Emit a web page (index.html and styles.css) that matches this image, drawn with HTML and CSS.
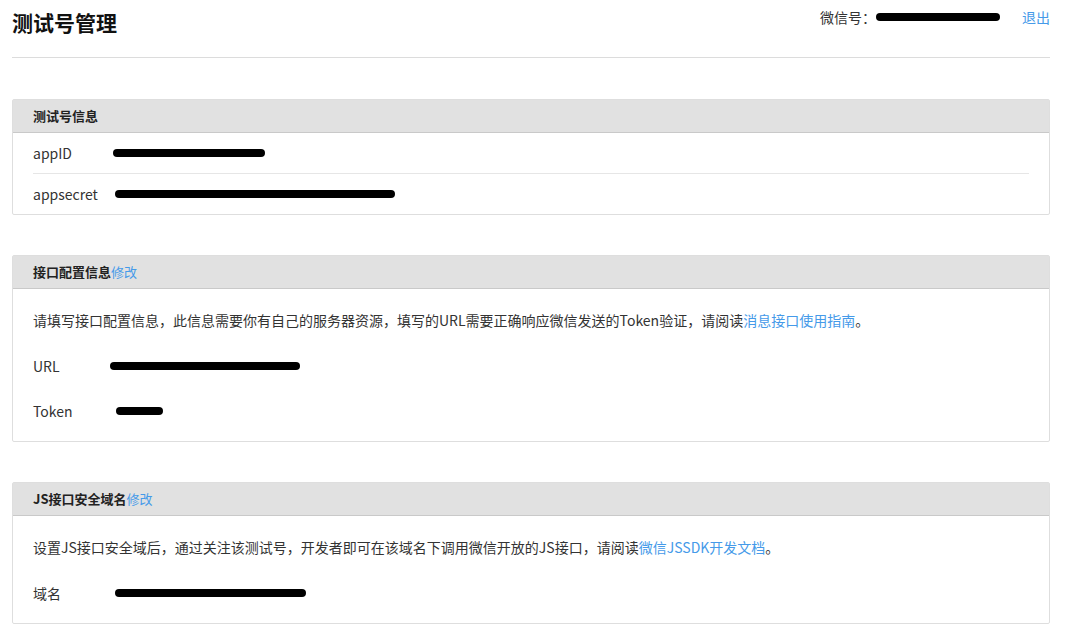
FILE: index.html
```html
<!DOCTYPE html>
<html lang="zh-CN">
<head>
  <meta charset="UTF-8" />
  <title>测试号管理</title>
  <link rel="stylesheet" href="styles.css">
</head>
<body>
  <div class="page">

    <!-- 顶部 -->
    <div class="topbar">
      <h1>测试号管理</h1>
      <div class="user">
        <span>微信号：</span>
        <span class="mask" style="width:124px"></span>
        <a class="logout" href="#">退出</a>
      </div>
    </div>

    <!-- 测试号信息 -->
    <div class="panel">
      <div class="panel-head">测试号信息</div>
      <div class="panel-body">
        <div class="row line">
          <span class="label">appID</span>
          <span class="mask" style="width:152px"></span>
        </div>
        <div class="row">
          <span class="label">appsecret</span>
          <span class="mask" style="width:280px;margin-left:2px"></span>
        </div>
      </div>
    </div>

    <!-- 接口配置信息 -->
    <div class="panel">
      <div class="panel-head">接口配置信息<a href="#">修改</a></div>
      <div class="panel-body spaced">
        <div class="desc">请填写接口配置信息，此信息需要你有自己的服务器资源，填写的URL需要正确响应微信发送的Token验证，请阅读<a href="#">消息接口使用指南</a>。</div>
        <div class="row tall">
          <span class="label">URL</span>
          <span class="mask" style="width:190px;margin-left:-3px"></span>
        </div>
        <div class="row tall">
          <span class="label">Token</span>
          <span class="mask" style="width:47px;margin-left:3px"></span>
        </div>
      </div>
    </div>

    <!-- JS接口安全域名 -->
    <div class="panel">
      <div class="panel-head">JS接口安全域名<a href="#">修改</a></div>
      <div class="panel-body spaced">
        <div class="desc">设置JS接口安全域后，通过关注该测试号，开发者即可在该域名下调用微信开放的JS接口，请阅读<a href="#">微信JSSDK开发文档</a>。</div>
        <div class="row tall">
          <span class="label">域名</span>
          <span class="mask" style="width:191px;margin-left:2px"></span>
        </div>
      </div>
    </div>

  </div>
</body>
</html>
```

FILE: styles.css
```css
body {
  margin: 0;
  font-family: "Noto Sans CJK SC", "Liberation Sans", sans-serif;
  font-size: 14px;
  color: #333;
  background-color: white;
}

a {
  color: #459ae9;
  text-decoration: none;
}

.page {
  margin: 0 19px 0 12px;
}

.topbar {
  height: 57px;
  border-bottom: 1px solid #dcdcdc;
  display: flex;
  justify-content: space-between;
  align-items: flex-start;
}

.topbar h1 {
  margin: 7px 0 0;
  font-size: 21px;
  font-weight: bold;
  color: #111;
  line-height: 30px;
}

.user {
  display: flex;
  align-items: center;
  height: 34px;
  font-size: 14px;
}

.logout {
  margin-left: 22px;
}

.panel {
  margin-top: 40px;
  border: 1px solid #dedede;
  border-radius: 2px;
}

.topbar + .panel {
  margin-top: 41px;
}

.panel-head {
  height: 32px;
  line-height: 32px;
  padding: 0 20px;
  background-color: #e1e1e1;
  border-bottom: 1px solid #c9c9c9;
  font-size: 13px;
  font-weight: bold;
  color: #222;
}

.panel-head a {
  font-weight: normal;
}

.panel-body {
  padding: 0 20px;
}

.panel-body.spaced {
  padding: 9px 20px 8px;
}

.row {
  display: flex;
  align-items: center;
  height: 40px;
}

.row.line {
  height: 40px;
  border-bottom: 1px solid #e6e6e6;
}

.row.tall {
  height: 45px;
}

.desc {
  height: 45px;
  line-height: 45px;
  overflow: hidden;
  white-space: nowrap;
}

.label {
  width: 80px;
  flex-shrink: 0;
}

.mask {
  display: inline-block;
  height: 8px;
  background-color: #000;
  border-radius: 5px;
}
```
